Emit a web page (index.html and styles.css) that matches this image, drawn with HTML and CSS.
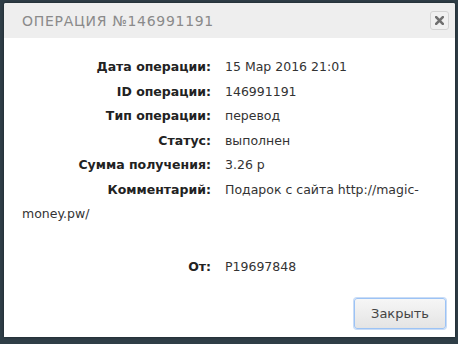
FILE: index.html
```html
<!DOCTYPE html>
<html>
<head>
<meta charset="utf-8">
<link rel="stylesheet" href="styles.css">
</head>
<body>
<div class="dialog">
  <div class="titlebar">
    <span class="title">ОПЕРАЦИЯ №146991191</span>
    <button class="close-x" aria-label="close">
      <svg width="9" height="9" viewBox="0 0 9 9"><path d="M1.2 1.2 L7.8 7.8 M7.8 1.2 L1.2 7.8" stroke="#6f6f6f" stroke-width="2.6" stroke-linecap="square"/></svg>
    </button>
  </div>
  <div class="content">
    <div class="row"><span class="label">Дата операции:</span><span class="value">15 Мар 2016 21:01</span></div>
    <div class="row"><span class="label">ID операции:</span><span class="value">146991191</span></div>
    <div class="row"><span class="label">Тип операции:</span><span class="value">перевод</span></div>
    <div class="row"><span class="label">Статус:</span><span class="value">выполнен</span></div>
    <div class="row"><span class="label">Сумма получения:</span><span class="value">3.26 р</span></div>
    <div class="row"><span class="label">Комментарий:</span><span class="value">Подарок с сайта http://magic-</span></div>
    <div class="row wrap"><span class="value">money.pw/</span></div>
    <div class="row blank">&nbsp;</div>
    <div class="row from"><span class="label">От:</span><span class="value">P19697848</span></div>
  </div>
  <div class="footer">
    <button class="btn">Закрыть</button>
  </div>
</div>
</body>
</html>
```
FILE: styles.css
```css
html, body {
  margin: 0;
  height: 100%;
}
body {
  background: #2f3e47;
  padding: 3px 3px 7px 4px;
  box-sizing: border-box;
  font-family: "DejaVu Sans", sans-serif;
}
.dialog {
  width: 451px;
  height: 334px;
  background: #fff;
  display: flex;
  flex-direction: column;
  box-shadow: 0 0 3px rgba(0,0,0,0.5);
  border-radius: 2px 2px 0 0;
}
.titlebar {
  height: 35px;
  background: #eeeeee;
  display: flex;
  align-items: center;
  justify-content: space-between;
  padding: 0 6px 0 18px;
  border-radius: 2px 2px 0 0;
}
.title {
  font-size: 14px;
  color: #8a8a8a;
  letter-spacing: 0.7px;
  font-weight: 400;
}
.close-x {
  width: 19px;
  height: 19px;
  padding: 0;
  margin: 0;
  border: 1px solid #d3d3d3;
  border-radius: 3px;
  background: #f0f0f0;
  display: flex;
  align-items: center;
  justify-content: center;
}
.content {
  flex: 1;
  padding: 17px 10px 0 18px;
  font-size: 12.5px;
  line-height: 24.5px;
  color: #333;
}
.label {
  display: inline-block;
  width: 189px;
  text-align: right;
  font-weight: bold;
  color: #222;
  margin-right: 14px;
}
.from {
  margin-top: 4px;
}
.footer {
  display: flex;
  justify-content: flex-end;
  padding: 0 9px 8px 0;
}
.btn {
  width: 92px;
  height: 31px;
  border: 1px solid #9cc3f5;
  box-shadow: 0 0 0 1px #c9dcf6;
  border-radius: 3px;
  background: linear-gradient(#f6f6f6, #e4e4e4);
  font-family: "DejaVu Sans", sans-serif;
  font-size: 13px;
  color: #444;
  padding: 0;
}
```
